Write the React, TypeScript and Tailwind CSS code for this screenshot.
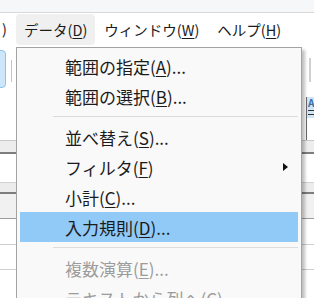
import * as React from "react";

interface MenuItem {
  label: string;
  key: string;
  dots?: boolean;
  submenu?: boolean;
  disabled?: boolean;
  active?: boolean;
  sep?: boolean;
}

const items: MenuItem[] = [
  { label: "範囲の指定", key: "A", dots: true },
  { label: "範囲の選択", key: "B", dots: true },
  { label: "", key: "", sep: true },
  { label: "並べ替え", key: "S", dots: true },
  { label: "フィルタ", key: "F", submenu: true },
  { label: "小計", key: "C", dots: true },
  { label: "入力規則", key: "D", dots: true, active: true },
  { label: "", key: "", sep: true },
  { label: "複数演算", key: "E", dots: true, disabled: true },
  { label: "テキストから列へ", key: "C", dots: true, disabled: true },
];

function Label({ text, k, dots }: { text: string; k: string; dots?: boolean }) {
  return (
    <span className="whitespace-nowrap">
      {text}(<span className="underline underline-offset-2">{k}</span>){dots ? "..." : ""}
    </span>
  );
}

export default function App() {
  return (
    <div className="relative w-[314px] h-[298px] overflow-hidden bg-white font-[Noto_Sans_CJK_JP,sans-serif] text-[14.5px] text-[#1b1b1b]">
      {/* title strip */}
      <div className="h-[13px] bg-[#f6f7f8] border-b border-[#d8d8d8]" />

      {/* menu bar */}
      <div className="flex h-[33px] items-center bg-white">
        <div className="w-[16px] pl-[2px] leading-none">)</div>
        <div className="flex h-[31px] items-center rounded-[4px] bg-[#f0f0f0] px-2">
          <Label text="データ" k="D" />
        </div>
        <div className="flex h-[31px] items-center px-2 ml-[1px]">
          <Label text="ウィンドウ" k="W" />
        </div>
        <div className="flex h-[31px] items-center px-2 ml-[2px]">
          <Label text="ヘルプ" k="H" />
        </div>
      </div>

      {/* sheet area behind the menu */}
      <div className="flex h-[94px]">
        <div className="flex w-[16px] items-start">
          <div className="-ml-[6px] mt-[4px] h-[38px] w-[12px] rounded-[4px] border border-[#8fc3ef] bg-[#cde6fb]" />
          <div className="ml-[5px] mt-[14px] h-[22px] w-px bg-[#c4c4c4]" />
        </div>
        <div className="flex-1" />
        <div className="flex w-[8px] flex-col overflow-hidden">
          <div className="ml-[3px] mt-[12px] h-[24px] w-[2px] bg-[#d0d0d0]" />
          <div className="mt-[15px] flex h-[21px] flex-col border-l border-[#6b6b6b] bg-[#cfe5f8] pl-[1px] text-[10px] font-bold leading-[12px] text-[#3b6ea8]">
            <span>A</span>
            <div className="mt-[1px] h-px bg-[#333]" />
            <div className="mt-[3px] h-px bg-[#333]" />
          </div>
          <div className="flex-1 border-l border-[#6b6b6b]" />
        </div>
      </div>
      <div className="h-px bg-[#c8c8c8]" />
      <div className="h-[11px] bg-[#ededed]" />
      <div className="h-[2px] bg-[#7d7d7d]" />
      <div className="h-[28px] bg-white" />
      <div className="h-px bg-[#d2d2d2]" />
      <div className="h-[9px] bg-[#ececec]" />
      <div className="h-[2px] bg-[#7d7d7d]" />
      <div className="h-[24px] bg-[#f1f1f1]" />
      <div className="h-px bg-[#9d9d9d]" />
      <div className="h-[25px] bg-white" />
      <div className="h-px bg-[#cfcfcf]" />
      <div className="h-[24px] bg-white" />
      <div className="h-px bg-[#cfcfcf]" />

      {/* dropdown menu */}
      <div className="absolute left-[16px] top-[47px] w-[286px] border border-[#a3a3a3] bg-[#f9f9f9] px-[3px] pt-[3px] pb-[3px] text-[17px] shadow-[3px_3px_3px_rgba(0,0,0,0.25)]">
        {items.map((it, i) =>
          it.sep ? (
            <div key={i} className="h-[11px] pt-[5px] pl-[33px]">
              <div className="h-px bg-[#dcdcdc]" />
            </div>
          ) : (
            <div
              key={i}
              className={
                "flex h-[30px] items-center justify-between pl-[45px] pr-[10px] leading-none " +
                (it.active ? "bg-[#91c9f7] " : "") +
                (it.disabled ? "text-[#9c9c9c]" : "")
              }
            >
              <Label text={it.label} k={it.key} dots={it.dots} />
              {it.submenu && (
                <svg width="5" height="8" viewBox="0 0 5 8">
                  <path d="M0 0 L5 4 L0 8 Z" fill="#111" />
                </svg>
              )}
            </div>
          )
        )}
      </div>
    </div>
  );
}
